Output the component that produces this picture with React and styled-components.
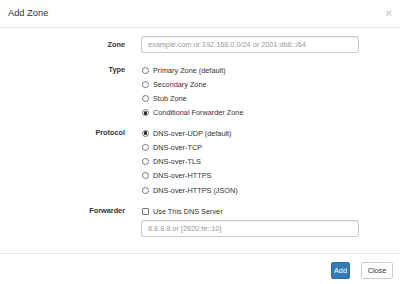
import React from "react";
import styled, { createGlobalStyle } from "styled-components";

const GlobalStyle = createGlobalStyle`
  html, body { margin: 0; padding: 0; background: #fff; }
  body {
    font-family: "Liberation Sans", Arial, Helvetica, sans-serif;
    font-size: 7.3px;
    color: #333;
  }
  * { box-sizing: border-box; }
`;

const Modal = styled.div`
  width: 400px;
  height: 284px;
  background: #fff;
  display: flex;
  flex-direction: column;
`;

const Header = styled.div`
  height: 28px;
  border-bottom: 1px solid #e5e5e5;
  display: flex;
  align-items: center;
  justify-content: space-between;
  padding: 0 8px 0 8px;
`;

const Title = styled.h4`
  margin: 0;
  font-size: 9.3px;
  font-weight: normal;
  line-height: 1;
  color: #333;
`;

const CloseX = styled.button`
  border: 0;
  background: none;
  padding: 0;
  font-family: inherit;
  font-size: 11px;
  font-weight: bold;
  line-height: 1;
  color: #000;
  opacity: 0.2;
  margin-top: -1px;
`;

const Body = styled.div`
  padding: 8px 0 16px 0;
`;

const Group = styled.div`
  display: grid;
  grid-template-columns: 125px 218px;
  column-gap: 16px;
  margin-bottom: ${(p) => p.$mb || 0}px;
  padding-top: ${(p) => p.$pt || 0}px;
`;

const Label = styled.label`
  text-align: right;
  font-weight: bold;
  line-height: ${(p) => p.$lh}px;
  color: #333;
`;

const Controls = styled.div`
  display: flex;
  flex-direction: column;
`;

const Input = styled.input`
  width: 218px;
  height: 17px;
  border: 1px solid #ccc;
  border-radius: 2px;
  padding: 0 6px;
  font-family: inherit;
  font-size: 7.3px;
  color: #555;
  margin-top: ${(p) => p.$mt || 0}px;
  box-shadow: inset 0 1px 1px rgba(0, 0, 0, 0.075);
  outline: none;
  &::placeholder { color: #999; }
`;

const OptionRow = styled.label`
  display: flex;
  align-items: center;
  height: ${(p) => p.$h || 14.25}px;
  gap: 4px;
  color: #333;
  padding-left: 1px;
`;

const RadioDot = styled.span`
  width: 7px;
  height: 7px;
  border-radius: 50%;
  border: 1px solid #767676;
  background: #fff;
  display: inline-flex;
  align-items: center;
  justify-content: center;
  flex: none;
  &::after {
    content: "";
    width: 3.4px;
    height: 3.4px;
    border-radius: 50%;
    background: ${(p) => (p.$checked ? "#222" : "transparent")};
  }
`;

const CheckBox = styled.span`
  width: 7px;
  height: 7px;
  border: 1px solid #767676;
  border-radius: 1px;
  background: #fff;
  flex: none;
`;

const Footer = styled.div`
  border-top: 1px solid #e5e5e5;
  padding: 8px 7px 0 7px;
  display: flex;
  justify-content: flex-end;
  gap: 11px;
`;

const Button = styled.button`
  height: 17px;
  width: ${(p) => p.$w}px;
  padding: 0;
  border-radius: 2px;
  font-family: inherit;
  font-size: 7.3px;
  border: 1px solid ${(p) => (p.$primary ? "#2e6da4" : "#ccc")};
  background: ${(p) => (p.$primary ? "#337ab7" : "#fff")};
  color: ${(p) => (p.$primary ? "#fff" : "#333")};
`;

const Radio = ({ checked, children }) => (
  <OptionRow>
    <RadioDot $checked={checked} />
    <span>{children}</span>
  </OptionRow>
);

export default function App() {
  return (
    <>
      <GlobalStyle />
      <Modal>
        <Header>
          <Title>Add Zone</Title>
          <CloseX>×</CloseX>
        </Header>
        <Body>
          <Group $mb={8}>
            <Label $lh={17}>Zone</Label>
            <Input placeholder="example.com or 192.168.0.0/24 or 2001:db8::/64" />
          </Group>
          <Group $mb={6} $pt={2}>
            <Label $lh={14.25}>Type</Label>
            <Controls>
              <Radio>Primary Zone (default)</Radio>
              <Radio>Secondary Zone</Radio>
              <Radio>Stub Zone</Radio>
              <Radio checked>Conditional Forwarder Zone</Radio>
            </Controls>
          </Group>
          <Group $mb={7}>
            <Label $lh={14.25}>Protocol</Label>
            <Controls>
              <Radio checked>DNS-over-UDP (default)</Radio>
              <Radio>DNS-over-TCP</Radio>
              <Radio>DNS-over-TLS</Radio>
              <Radio>DNS-over-HTTPS</Radio>
              <Radio>DNS-over-HTTPS (JSON)</Radio>
            </Controls>
          </Group>
          <Group>
            <Label $lh={14}>Forwarder</Label>
            <Controls>
              <OptionRow $h={14}>
                <CheckBox />
                <span>Use This DNS Server</span>
              </OptionRow>
              <Input $mt={2} placeholder="8.8.8.8 or [2620:fe::10]" />
            </Controls>
          </Group>
        </Body>
        <Footer>
          <Button $primary $w={19}>Add</Button>
          <Button $w={32}>Close</Button>
        </Footer>
      </Modal>
    </>
  );
}
